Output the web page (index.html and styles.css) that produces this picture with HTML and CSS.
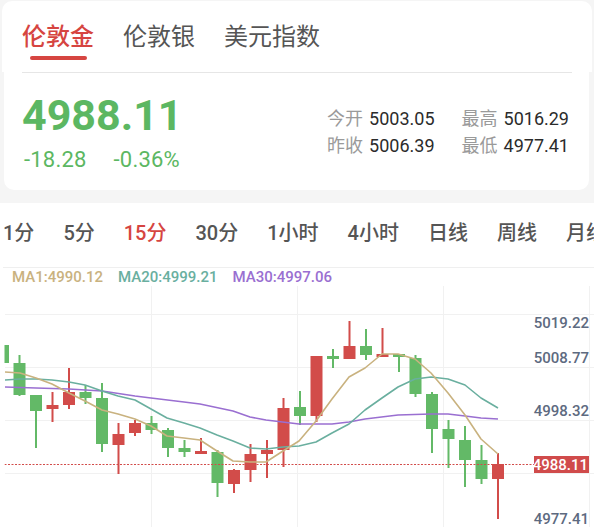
FILE: index.html
```html
<!DOCTYPE html>
<html lang="zh-CN">
<head>
    <meta charset="UTF-8">
    <meta name="viewport" content="width=device-width, initial-scale=1.0">
    <title>伦敦金行情</title>
    <link rel="stylesheet" href="styles.css">
</head>
<body>
    <div class="top">
        <nav class="market-tabs">
            <span class="market-tab active">伦敦金</span>
            <span class="market-tab">伦敦银</span>
            <span class="market-tab">美元指数</span>
        </nav>
        <section class="quote">
            <div class="quote-divider"></div>
            <div class="quote-body">
                <div class="quote-main">
                    <div class="price">4988.11</div>
                    <div class="change">
                        <span>-18.28</span>
                        <span>-0.36%</span>
                    </div>
                </div>
                <div class="quote-stats">
                    <div class="stat"><span class="stat-label">今开</span><span class="stat-value">5003.05</span></div>
                    <div class="stat"><span class="stat-label">最高</span><span class="stat-value">5016.29</span></div>
                    <div class="stat"><span class="stat-label">昨收</span><span class="stat-value">5006.39</span></div>
                    <div class="stat"><span class="stat-label">最低</span><span class="stat-value">4977.41</span></div>
                </div>
            </div>
        </section>
    </div>

    <section class="kline">
        <div class="periods">
            <span class="period">1分</span>
            <span class="period">5分</span>
            <span class="period active">15分</span>
            <span class="period">30分</span>
            <span class="period">1小时</span>
            <span class="period">4小时</span>
            <span class="period">日线</span>
            <span class="period">周线</span>
            <span class="period">月线</span>
        </div>
        <div class="legend">
            <span class="ma1">MA1:4990.12</span>
            <span class="ma20">MA20:4999.21</span>
            <span class="ma30">MA30:4997.06</span>
        </div>
        <svg class="chart" width="594" height="242" viewBox="0 285 594 242">
            <defs>
                <clipPath id="plot"><rect x="4.5" y="285" width="590" height="242"/></clipPath>
            </defs>
            <!-- grid -->
            <g stroke="#f1f1f1" stroke-width="1">
                <line x1="5" y1="313.5" x2="594" y2="313.5"/>
                <line x1="5" y1="366.5" x2="594" y2="366.5"/>
                <line x1="5" y1="419.5" x2="594" y2="419.5"/>
                <line x1="5" y1="472.5" x2="594" y2="472.5"/>
                <line x1="5" y1="526.5" x2="594" y2="526.5"/>
                <line x1="151.5" y1="285" x2="151.5" y2="527"/>
                <line x1="297.5" y1="285" x2="297.5" y2="527"/>
                <line x1="443.5" y1="285" x2="443.5" y2="527"/>
                <line x1="589.5" y1="285" x2="589.5" y2="527"/>
            </g>
            <g clip-path="url(#plot)">
                <!-- rising -->
                <g fill="#d24c4a">
                    <rect x="51.5" y="391" width="2" height="30"/><rect x="46.5" y="404" width="12" height="4"/>
                    <rect x="68" y="367" width="2" height="41"/><rect x="63" y="391" width="12" height="13"/>
                    <rect x="117.5" y="422" width="2" height="51"/><rect x="112.5" y="433" width="12" height="11"/>
                    <rect x="134" y="419" width="2" height="16"/><rect x="129" y="422" width="12" height="10"/>
                    <rect x="200" y="437" width="2" height="16"/><rect x="195" y="450" width="12" height="3"/>
                    <rect x="233" y="468" width="2" height="24"/><rect x="228" y="469" width="12" height="14"/>
                    <rect x="249.5" y="443" width="2" height="38"/><rect x="244.5" y="453" width="12" height="16"/>
                    <rect x="266" y="439" width="2" height="38"/><rect x="261" y="449" width="12" height="4"/>
                    <rect x="282.5" y="397" width="2" height="69"/><rect x="277.5" y="407" width="12" height="42"/>
                    <rect x="315.5" y="355" width="2" height="66"/><rect x="310.5" y="355" width="12" height="60"/>
                    <rect x="348.5" y="320" width="2" height="38"/><rect x="343.5" y="345" width="12" height="13"/>
                    <rect x="381.5" y="327" width="2" height="28"/><rect x="376.5" y="353" width="12" height="3"/>
                    <rect x="497" y="452" width="2" height="66"/><rect x="492" y="463" width="12" height="15"/>
                </g>
                <!-- falling -->
                <g fill="#63b967">
                    <rect x="-3" y="344" width="12" height="18"/>
                    <rect x="18.5" y="354" width="2" height="41"/><rect x="13.5" y="362" width="12" height="32"/>
                    <rect x="35" y="394" width="2" height="53"/><rect x="30" y="394" width="12" height="16"/>
                    <rect x="84.5" y="384" width="2" height="19"/><rect x="79.5" y="391" width="12" height="6"/>
                    <rect x="101" y="382" width="2" height="69"/><rect x="96" y="397" width="12" height="46"/>
                    <rect x="150.5" y="415" width="2" height="18"/><rect x="145.5" y="422" width="12" height="7"/>
                    <rect x="167" y="427" width="2" height="29"/><rect x="162" y="429" width="12" height="18"/>
                    <rect x="183.5" y="439" width="2" height="17"/><rect x="178.5" y="447" width="12" height="4"/>
                    <rect x="216.5" y="449" width="2" height="47"/><rect x="211.5" y="451" width="12" height="31"/>
                    <rect x="299" y="390" width="2" height="34"/><rect x="294" y="406" width="12" height="9"/>
                    <rect x="332" y="348" width="2" height="19"/><rect x="327" y="355" width="12" height="3"/>
                    <rect x="365" y="328" width="2" height="31"/><rect x="360" y="345" width="12" height="9"/>
                    <rect x="398" y="353" width="2" height="18"/><rect x="393" y="353" width="12" height="3"/>
                    <rect x="414.5" y="354" width="2" height="42"/><rect x="409.5" y="357" width="12" height="36"/>
                    <rect x="431" y="391" width="2" height="61"/><rect x="426" y="393" width="12" height="35"/>
                    <rect x="447.5" y="419" width="2" height="48"/><rect x="442.5" y="428" width="12" height="10"/>
                    <rect x="464" y="425" width="2" height="61"/><rect x="459" y="439" width="12" height="20"/>
                    <rect x="480.5" y="444" width="2" height="39"/><rect x="475.5" y="459" width="12" height="19"/>
                </g>
                <!-- moving averages -->
                <g fill="none" stroke-width="1.6" stroke-linejoin="round">
                    <polyline stroke="#9a6fd1" points="5,386 36,387 69,388 102,390 135,395 151,397 184,401 200,403 233,410 250,416 266,419 299,423 332,423 349,421 365,418 398,414 431,413 448,413 465,415 481,417 498,418"/>
                    <polyline stroke="#6aaf9f" points="5,379 20,378 36,378 52,379 69,381 85,384 102,390 118,395 135,399 151,408 167,417 184,422 200,427 217,434 233,440 250,447 266,448 283,446 299,445 316,441 332,432 349,423 365,409 382,397 398,386 415,378 431,376 448,378 465,384 481,397 498,407"/>
                    <polyline stroke="#c9b27f" points="5,371 20,372 36,377 52,383 69,392 85,400 102,409 118,413 135,418 151,425 167,435 184,437 200,439 217,450 233,460 250,461 266,461 283,450 299,440 316,420 332,398 349,376 365,367 382,353 398,353 415,358 431,372 448,392 465,414 481,438 498,453"/>
                </g>
                <line x1="4.5" y1="463.5" x2="534" y2="463.5" stroke="#d24c4a" stroke-width="1" stroke-dasharray="2 1.5"/>
            </g>
            <!-- price axis -->
            <g class="axis-label" text-anchor="end">
                <text x="589" y="327">5019.22</text>
                <text x="589" y="362">5008.77</text>
                <text x="589" y="415">4998.32</text>
                <text x="589" y="523">4977.41</text>
            </g>
            <rect x="534" y="455" width="55" height="17" fill="#d04b4b"/>
            <text class="axis-tag" x="588" y="469" text-anchor="end">4988.11</text>
        </svg>
    </section>
</body>
</html>
```

FILE: styles.css
```css
* {
    box-sizing: border-box;
}

body {
    margin: 0;
    width: 594px;
    height: 527px;
    overflow: hidden;
    background-color: #f5f5f5;
    font-family: Roboto, "Noto Sans CJK SC", sans-serif;
    color: #333;
}

/* market switch + quote card */
.top {
    height: 190px;
}

.market-tabs {
    margin: 1px 2px 0;
    height: 71px;
    padding: 20px 0 0 20px;
    background: #fff;
    border-radius: 10px 10px 0 0;
    display: flex;
    align-items: flex-start;
    gap: 29px;
}

.market-tab {
    display: flex;
    flex-direction: column;
    align-items: center;
    font-size: 24px;
    line-height: 32px;
    color: #555;
    white-space: nowrap;
}

.market-tab.active {
    color: #d64541;
    font-weight: 500;
}

.market-tab.active::after {
    content: "";
    width: 57px;
    height: 4px;
    margin-top: 3px;
    border-radius: 2px;
    background: #d64541;
}

.quote {
    margin: 0 5px 0 4px;
    height: 118px;
    background: #fff;
    border-radius: 0 0 10px 10px;
}

.quote-divider {
    height: 1px;
    margin: 0 17px 0 18px;
    background: #e6e6e6;
}

.quote-body {
    display: flex;
    align-items: flex-start;
    justify-content: space-between;
    padding: 16px 20px 0 18px;
}

.price {
    font-size: 43px;
    line-height: 52px;
    font-weight: 700;
    color: #5cb762;
}

.change {
    display: flex;
    gap: 27px;
    margin-top: 7px;
    padding-left: 2px;
    font-size: 22px;
    line-height: 24px;
    letter-spacing: 0.2px;
    color: #5cb762;
}

.quote-stats {
    display: grid;
    grid-template-columns: auto auto;
    column-gap: 27px;
    padding-top: 16px;
    font-size: 18px;
    line-height: 27px;
}

.stat {
    display: flex;
    gap: 6px;
    white-space: nowrap;
}

.stat-label {
    color: #9a9a9a;
}

.stat-value {
    color: #2b2b2b;
}

/* kline panel */
.kline {
    margin-top: 12px;
    height: 325px;
    background: #fff;
}

.periods {
    display: flex;
    align-items: center;
    gap: 29px;
    height: 65px;
    padding-bottom: 8px;
    margin-left: 3px;
    border-bottom: 1px solid #efefef;
    font-size: 20px;
    font-weight: 500;
    color: #555;
    white-space: nowrap;
}

.period.active {
    color: #d64541;
}

.legend {
    display: flex;
    gap: 15px;
    padding-left: 12px;
    font-size: 15px;
    line-height: 18px;
    font-weight: 500;
}

.ma1 { color: #c9b27f; }
.ma20 { color: #6aaf9f; }
.ma30 { color: #9a6fd1; }

.chart {
    display: block;
}

.axis-label {
    font-size: 15px;
    font-weight: 500;
    fill: #5d6a80;
}

.axis-tag {
    font-size: 15px;
    font-weight: 500;
    fill: #fff;
}
```
